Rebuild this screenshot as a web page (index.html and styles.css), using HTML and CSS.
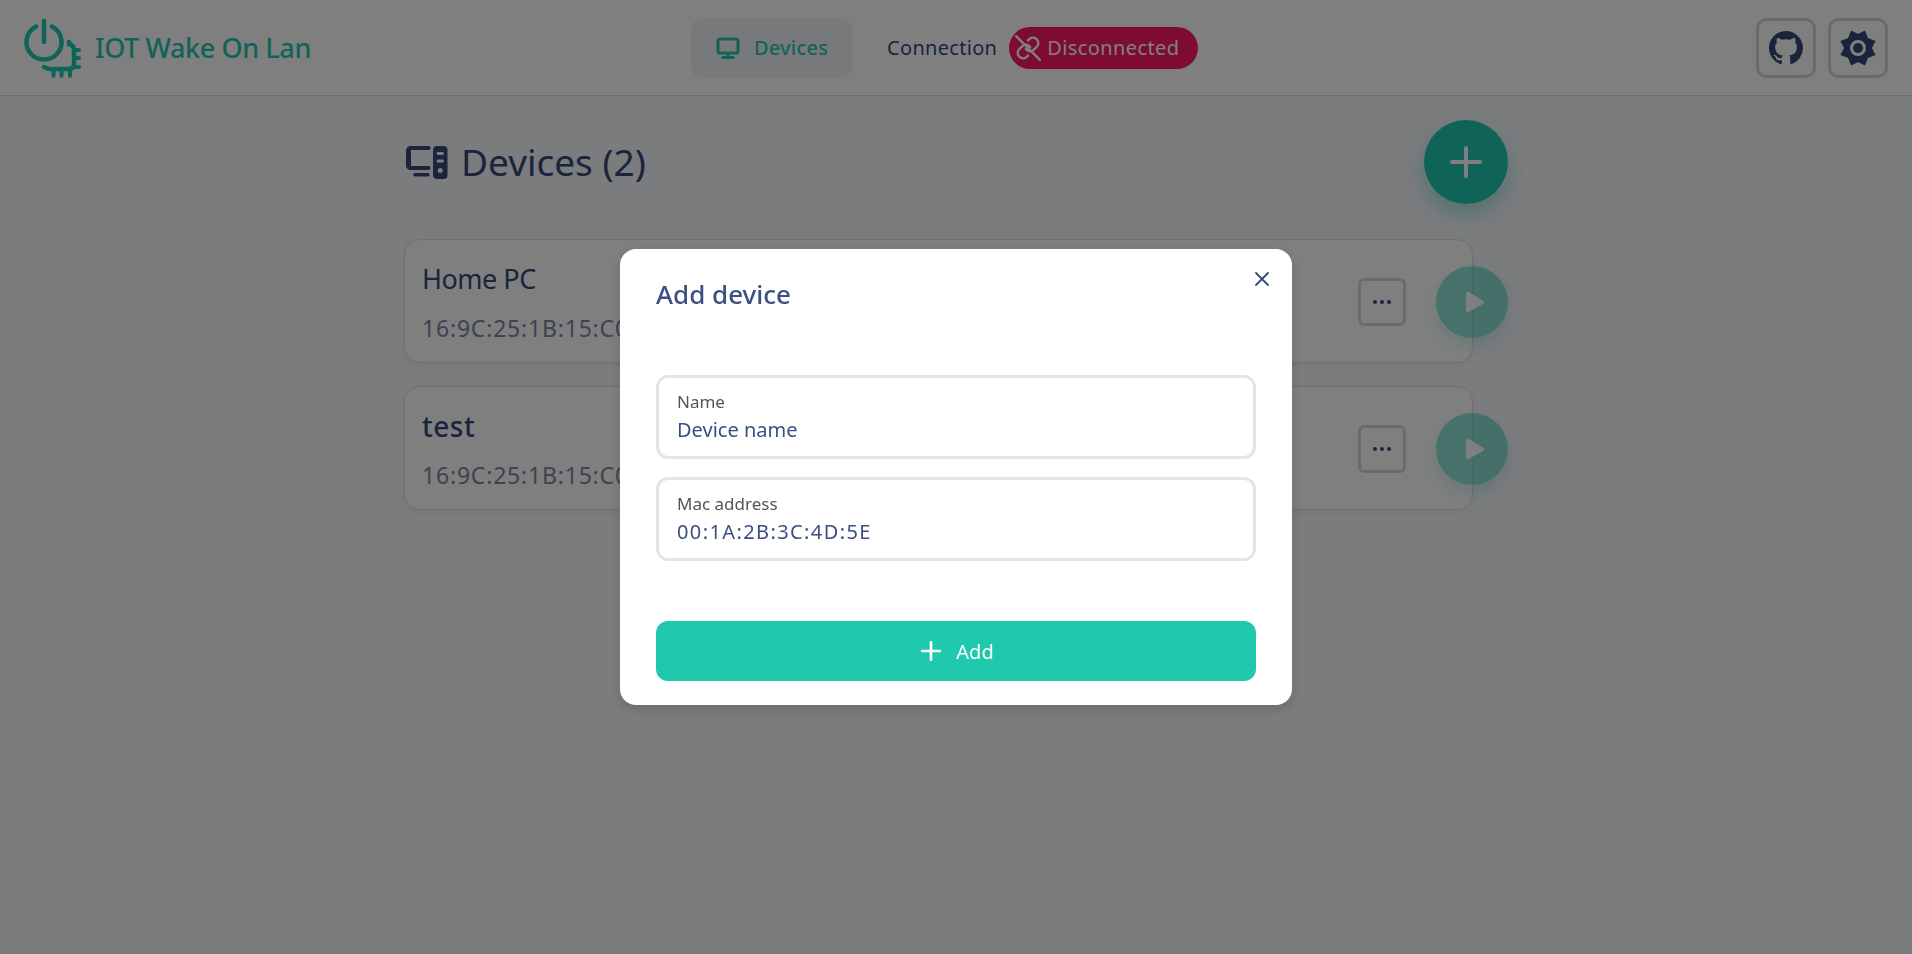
FILE: index.html
```html
<!DOCTYPE html>
<html lang="en">
<head>
<meta charset="UTF-8">
<title>IOT Wake On Lan</title>
<link rel="stylesheet" href="styles.css">
</head>
<body>
<header class="topbar">
    <div class="brand">
        <svg class="brand-icon" viewBox="0 0 60 62" fill="none" stroke="currentColor" stroke-width="4.500" stroke-linecap="round">
            <path d="M13 8.500A17.500 17.500 0 1 0 29 8.500"/>
            <path d="M21 3V24"/>
            <path d="M46 24v2c3 1 5 3 5 6v14c0 3-2 5-5 5H27c-2 0-4-1-6-2"/>
            <path d="M52 32h4M52 40h4M52 49h4M30.500 52v6M38.500 52v6M47 52v6" stroke-width="4"/>
        </svg>
        <span>IOT Wake On Lan</span>
    </div>
    <nav class="nav">
        <a class="nav-item active">
            <svg viewBox="0 0 24 24" fill="none" stroke="currentColor" stroke-width="3" stroke-linecap="round" stroke-linejoin="round"><rect x="2" y="3" width="20" height="14" rx="2"/><path d="M12 18v3M7 21.500h10"/></svg>
            Devices
        </a>
        <div class="nav-item">Connection</div>
        <div class="badge">
            <svg viewBox="0 0 24 24" fill="none" stroke="currentColor" stroke-width="2.200" stroke-linecap="round" stroke-linejoin="round"><path d="M10 13a5 5 0 0 0 7.500.5l3-3a5 5 0 0 0-7-7l-1.500 1.500"/><path d="M14 11a5 5 0 0 0-7.500-.5l-3 3a5 5 0 0 0 7 7l1.500-1.500"/><path d="M1 1l22 22"/></svg>
            Disconnected
        </div>
    </nav>
    <div class="top-actions">
        <a class="square-btn github">
            <svg viewBox="0 0 16 16" fill="currentColor"><path d="M8 0C3.580 0 0 3.580 0 8c0 3.540 2.290 6.530 5.470 7.590.400.070.550-.170.550-.380 0-.190-.010-.820-.010-1.490-2.010.370-2.530-.490-2.690-.940-.090-.230-.480-.940-.820-1.130-.280-.150-.680-.520-.010-.530.630-.010 1.080.580 1.230.820.720 1.210 1.870.870 2.330.660.070-.520.280-.870.510-1.070-1.780-.200-3.640-.890-3.640-3.950 0-.870.310-1.590.820-2.150-.080-.200-.360-1.020.080-2.120 0 0 .670-.210 2.200.820.640-.180 1.320-.270 2-.270.680 0 1.360.090 2 .270 1.530-1.040 2.200-.820 2.200-.820.440 1.100.160 1.920.080 2.120.510.560.820 1.270.820 2.150 0 3.070-1.870 3.750-3.650 3.950.290.250.540.730.540 1.480 0 1.070-.010 1.930-.010 2.200 0 .210.150.460.550.380A8.013 8.013 0 0 0 16 8c0-4.420-3.580-8-8-8z"/></svg>
        </a>
        <a class="square-btn">
            <svg viewBox="0 0 40 40" fill="currentColor"><path fill-rule="evenodd" d="M20 6l6.900-3.600 3 7.700 7.700 3L34 20l3.600 6.900-7.700 3-3 7.700L20 34l-6.900 3.600-3-7.700-7.700-3L6 20l-3.600-6.900 7.700-3 3-7.700zM20 12a8 8 0 1 0 0 16 8 8 0 0 0 0-16z"/><circle cx="20" cy="20" r="5"/></svg>
        </a>
    </div>
</header>

<main class="content">
    <div class="page-head">
        <h1>
            <svg viewBox="0 0 42 33" fill="currentColor"><path d="M4.500 0h18a2 2 0 0 1 0 4H5v16h17.500a2 2 0 0 1 0 4H4.500A4.500 4.500 0 0 1 0 19.500v-15A4.500 4.500 0 0 1 4.500 0zM9 27h13a1.700 1.700 0 0 1 0 3.400H9A1.700 1.700 0 0 1 9 27z"/><path fill-rule="evenodd" d="M31 0h6.500a4 4 0 0 1 4 4v25a4 4 0 0 1-4 4H31a4 4 0 0 1-4-4V4a4 4 0 0 1 4-4zm1 6a1.500 1.500 0 0 0 0 3h4.500a1.500 1.500 0 0 0 0-3zm0 7.500a1.500 1.500 0 0 0 0 3h4.500a1.500 1.500 0 0 0 0-3zm2.250 8.500a2.500 2.500 0 1 0 0 5 2.500 2.500 0 0 0 0-5z"/></svg>
            <span>Devices (2)</span>
        </h1>
        <button class="fab">
            <svg viewBox="0 0 32 32" fill="none" stroke="currentColor" stroke-width="4" stroke-linecap="round"><path d="M16 2v28M2 16h28"/></svg>
        </button>
    </div>

    <section class="device-list">
        <article class="device">
            <div>
                <h2>Home PC</h2>
                <p>16:9C:25:1B:15:C0</p>
            </div>
            <div class="device-actions">
                <button class="more-btn"><i></i><i></i><i></i></button>
                <button class="play-btn"><svg viewBox="0 0 22 24" fill="currentColor"><path d="M1 3c0-2 1.500-3 3-2l16 9.500c1.500 1 1.500 2.500 0 3.500L4 23c-1.500 1-3 0-3-2z"/></svg></button>
            </div>
        </article>
        <article class="device">
            <div>
                <h2 class="bold">test</h2>
                <p>16:9C:25:1B:15:C0</p>
            </div>
            <div class="device-actions">
                <button class="more-btn"><i></i><i></i><i></i></button>
                <button class="play-btn"><svg viewBox="0 0 22 24" fill="currentColor"><path d="M1 3c0-2 1.500-3 3-2l16 9.500c1.500 1 1.500 2.500 0 3.500L4 23c-1.500 1-3 0-3-2z"/></svg></button>
            </div>
        </article>
    </section>
</main>

<div class="overlay">
    <div class="modal">
        <button class="modal-close">
            <svg viewBox="0 0 16 16" fill="none" stroke="currentColor" stroke-width="1.800" stroke-linecap="round"><path d="M2 2l12 12M14 2L2 14"/></svg>
        </button>
        <h3>Add device</h3>
        <div class="fields">
            <label class="field">
                <span>Name</span>
                <input type="text" placeholder="Device name">
            </label>
            <label class="field">
                <span>Mac address</span>
                <input class="mac" type="text" placeholder="00:1A:2B:3C:4D:5E">
            </label>
        </div>
        <button class="add-btn">
            <svg viewBox="0 0 20 20" fill="none" stroke="currentColor" stroke-width="2.400" stroke-linecap="round"><path d="M10 2v16M2 10h16"/></svg>
            Add
        </button>
    </div>
</div>
</body>
</html>
```

FILE: styles.css
```css
*{box-sizing:border-box;}
html,body{margin:0;padding:0;height:100%;}
body{background:#f6f8fc;color:#34497a;font-family:"Noto Sans","DejaVu Sans",sans-serif;overflow:hidden;}
h1,h2,h3,p{margin:0;}
button{font-family:inherit;cursor:pointer;border:0;padding:0;}

.topbar{display:flex;align-items:center;height:96px;padding:0 24px 0 23px;background:#fff;border-bottom:1px solid #d9d9dc;}
.brand{display:flex;align-items:center;gap:12px;width:287px;flex:none;white-space:nowrap;color:#20c9ae;font-size:27px;font-weight:500;letter-spacing:-.4px;}
.brand-icon{width:60px;height:62px;margin-top:2px;flex:none;}
.nav{display:flex;align-items:center;gap:12px;margin:0 auto 0 381px;color:#34497a;font-size:20px;letter-spacing:.3px;}
.nav-item{display:flex;align-items:center;gap:14px;height:60px;padding:0 24px 0 25px;border-radius:12px;}
.nav-item.active{background:#eff3f7;color:#20c9ae;font-weight:500;letter-spacing:.2px;}
.nav-item svg{width:24px;height:24px;}
.nav-item + .nav-item{padding:0 0 0 23px;}
.badge{display:flex;align-items:center;gap:6px;height:42px;padding:0 18px 0 6px;border-radius:21px;background:#fc1666;color:#fff;letter-spacing:.4px;}
.badge svg{width:26px;height:26px;}
.top-actions{display:flex;gap:12px;}
.square-btn{display:flex;align-items:center;justify-content:center;width:60px;height:60px;border:3px solid #d6d6d6;border-radius:10px;color:#34497a;}
.square-btn svg{width:40px;height:40px;}
.square-btn.github svg{width:34px;height:34px;}

.content{width:1104px;margin:0 auto;padding:0 35px 0 0;}
.page-head{display:flex;align-items:center;justify-content:space-between;height:84px;margin-top:24px;margin-right:-35px;padding-left:2px;}
.page-head h1{display:flex;align-items:center;gap:13px;font-size:37px;font-weight:400;color:#34497a;}
.page-head h1 span{margin-top:-2px;}
.page-head h1 svg{width:42px;height:33px;}
.fab{display:flex;align-items:center;justify-content:center;width:84px;height:84px;border-radius:50%;background:#20c9ae;color:#fff;box-shadow:0 10px 20px rgba(32,201,174,.4);}
.fab svg{width:32px;height:32px;}

.device-list{display:flex;flex-direction:column;gap:23px;margin-top:35px;}
.device{display:flex;align-items:center;justify-content:space-between;height:124px;padding:2px 0 0 17px;background:#fff;border:1px solid #dcdfe4;border-radius:16px;box-shadow:0 2px 6px rgba(0,0,0,.05);}
.device h2{font-size:27px;font-weight:400;line-height:38px;letter-spacing:-.5px;color:#34497a;}
.device h2.bold{font-size:28px;font-weight:500;letter-spacing:.5px;}
.device p{margin-top:14px;font-size:23px;line-height:32px;letter-spacing:.8px;color:#7a86a0;}
.device-actions{display:flex;align-items:center;gap:30px;margin-right:-36px;}
.more-btn{display:flex;align-items:center;justify-content:center;gap:3px;width:48px;height:48px;background:transparent;border:3px solid #d6d6d6;border-radius:6px;}
.more-btn i{width:4px;height:4px;border-radius:50%;background:#34497a;}
.play-btn{display:flex;align-items:center;justify-content:center;width:72px;height:72px;border-radius:50%;background:rgba(32,201,174,.5);color:#fff;box-shadow:0 8px 16px rgba(32,201,174,.2);}
.play-btn svg{width:20px;height:22px;margin-left:5px;}

.overlay{position:fixed;inset:0;display:flex;align-items:flex-start;justify-content:center;padding-top:249px;background:rgba(0,0,0,.5);}
.modal{position:relative;width:672px;height:456px;padding:0 36px;background:#fff;border-radius:16px;box-shadow:0 4px 12px rgba(0,0,0,.15);}
.modal h3{padding-top:24px;font-size:26px;line-height:42px;font-weight:500;color:#3a5082;}
.modal-close{position:absolute;top:22px;right:22px;width:16px;height:16px;background:none;color:#34497a;}
.modal-close svg{display:block;width:16px;height:16px;}
.fields{display:flex;flex-direction:column;gap:18px;margin-top:60px;}
.field{display:flex;flex-direction:column;height:84px;padding:12px 18px 0;border:3px solid #e5e5e5;border-radius:12px;}
.field span{font-size:17px;line-height:24px;color:#555;}
.field input{border:0;outline:0;padding:0;margin-top:2px;font:20px/28px "Noto Sans","DejaVu Sans",sans-serif;color:#3a5082;background:none;}
.field input.mac{letter-spacing:1.4px;}
.field input::placeholder{color:#3a5082;opacity:1;}
.add-btn{display:flex;align-items:center;justify-content:center;gap:14px;width:100%;height:60px;margin-top:60px;padding-left:2px;border-radius:12px;background:#20c9ae;color:#fff;font-size:20px;}
.add-btn svg{width:22px;height:22px;}
```
